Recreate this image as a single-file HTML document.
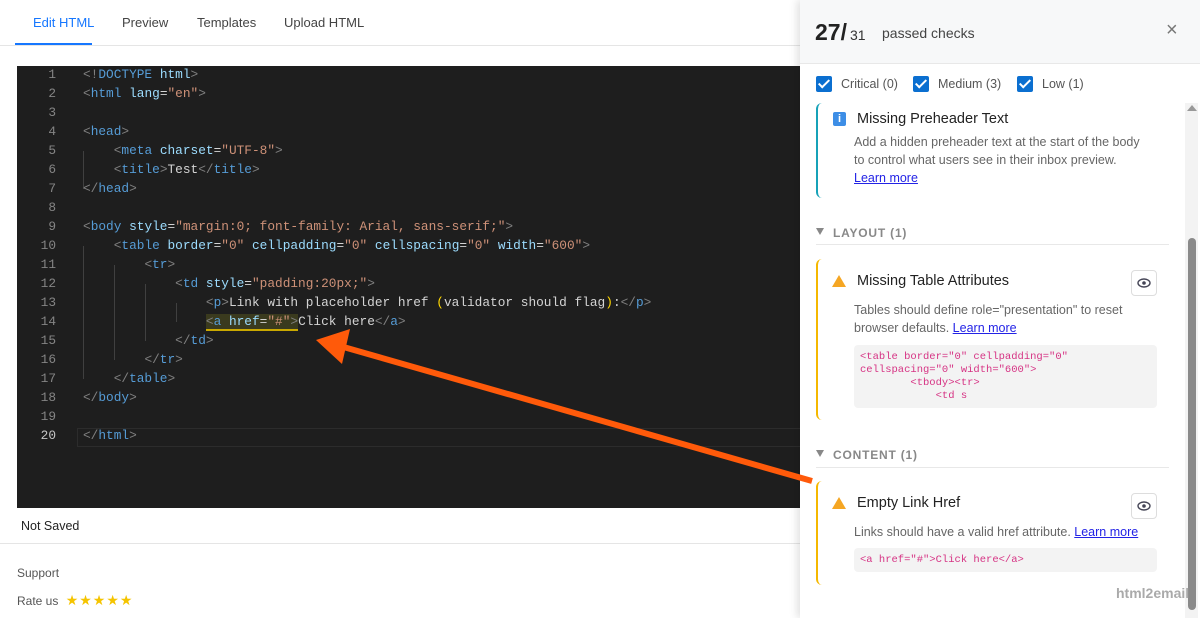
<!DOCTYPE html>
<html><head><style>
*{margin:0;padding:0;box-sizing:border-box}
body{width:1200px;height:618px;overflow:hidden;background:#fff;font-family:"Liberation Sans",sans-serif;position:relative;color:#333}
.a{position:absolute;white-space:nowrap}
.tab{font-size:13px;color:#444;top:15px}
#ed{position:absolute;left:17px;top:66px;width:800px;height:442px;background:#1e1e1e}
.ln{position:absolute;left:0;width:56px;text-align:right;font:12.8px "Liberation Mono",monospace;color:#858585}
.cd{position:absolute;left:66px;font:12.8px "Liberation Mono",monospace;color:#d4d4d4;white-space:pre}
.t{color:#569cd6}.g{color:#808080}.at{color:#9cdcfe}.s{color:#ce9178}.y{color:#ffd700}
.guide{position:absolute;width:1px;background:#404040}
#panel{position:absolute;left:800px;top:0;width:400px;height:618px;background:#fff;box-shadow:-3px 0 8px rgba(0,0,0,.12)}
.cb{position:absolute;width:16px;height:16px;background:#0b6fd0;border-radius:2px;top:76px}
.cb::after{content:"";position:absolute;left:5px;top:1px;width:4px;height:9px;border:solid #fff;border-width:0 2px 2px 0;transform:rotate(45deg)}
.lbl{font-size:12.5px;color:#555;top:77px}
.card{position:absolute;left:816px;width:340px;border-left:2px solid #f5b800;border-radius:6px 0 0 6px}
.ttl{font-size:14.5px;color:#222}
.desc{font-size:12.5px;color:#666;line-height:18px}
.lnk{color:#2323e6;text-decoration:underline}
.code{position:absolute;background:#f3f3f3;border-radius:4px;font:10.5px "Liberation Mono",monospace;color:#d63384;white-space:pre;line-height:13px;padding:6px}
.sec{font-size:12px;color:#888;font-weight:bold;letter-spacing:.8px}
.eye{position:absolute;width:26px;height:26px;border:1px solid #ddd;border-radius:4px;background:#fff}
.warn{position:absolute;width:0;height:0;border-left:7px solid transparent;border-right:7px solid transparent;border-bottom:12px solid #f5a623}
</style></head><body>
<div class="a tab" style="left:33px;color:#1677ff">Edit HTML</div>
<div class="a tab" style="left:122px">Preview</div>
<div class="a tab" style="left:197px">Templates</div>
<div class="a tab" style="left:284px">Upload HTML</div>
<div class="a" style="left:15px;top:43px;width:77px;height:2px;background:#1677ff"></div>
<div class="a" style="left:0;top:45px;width:800px;height:1px;background:#e5e5e5"></div>

<div id="ed">
<div class="guide" style="left:66px;top:85px;height:38px"></div>
<div class="guide" style="left:66px;top:180px;height:133px"></div>
<div class="guide" style="left:97px;top:199px;height:95px"></div>
<div class="guide" style="left:128px;top:218px;height:57px"></div>
<div class="guide" style="left:159px;top:237px;height:19px"></div>
<div class="a" style="left:60px;top:362px;width:740px;height:19px;border:1px solid #2c2c2c"></div>
</div>
<div id="code"></div>
<script>
var L=['<span class="g">&lt;!</span><span class="t">DOCTYPE</span> <span class="at">html</span><span class="g">&gt;</span>',
'<span class="g">&lt;</span><span class="t">html</span> <span class="at">lang</span>=<span class="s">"en"</span><span class="g">&gt;</span>','',
'<span class="g">&lt;</span><span class="t">head</span><span class="g">&gt;</span>',
'    <span class="g">&lt;</span><span class="t">meta</span> <span class="at">charset</span>=<span class="s">"UTF-8"</span><span class="g">&gt;</span>',
'    <span class="g">&lt;</span><span class="t">title</span><span class="g">&gt;</span>Test<span class="g">&lt;/</span><span class="t">title</span><span class="g">&gt;</span>',
'<span class="g">&lt;/</span><span class="t">head</span><span class="g">&gt;</span>','',
'<span class="g">&lt;</span><span class="t">body</span> <span class="at">style</span>=<span class="s">"margin:0; font-family: Arial, sans-serif;"</span><span class="g">&gt;</span>',
'    <span class="g">&lt;</span><span class="t">table</span> <span class="at">border</span>=<span class="s">"0"</span> <span class="at">cellpadding</span>=<span class="s">"0"</span> <span class="at">cellspacing</span>=<span class="s">"0"</span> <span class="at">width</span>=<span class="s">"600"</span><span class="g">&gt;</span>',
'        <span class="g">&lt;</span><span class="t">tr</span><span class="g">&gt;</span>',
'            <span class="g">&lt;</span><span class="t">td</span> <span class="at">style</span>=<span class="s">"padding:20px;"</span><span class="g">&gt;</span>',
'                <span class="g">&lt;</span><span class="t">p</span><span class="g">&gt;</span>Link with placeholder href <span class="y">(</span>validator should flag<span class="y">)</span>:<span class="g">&lt;/</span><span class="t">p</span><span class="g">&gt;</span>',
'                <span style="background:#3a3a1e;border-bottom:2px solid #c9a800"><span class="g">&lt;</span><span class="t">a</span> <span class="at">href</span>=<span class="s">"#"</span><span class="g">&gt;</span></span>Click here<span class="g">&lt;/</span><span class="t">a</span><span class="g">&gt;</span>',
'            <span class="g">&lt;/</span><span class="t">td</span><span class="g">&gt;</span>',
'        <span class="g">&lt;/</span><span class="t">tr</span><span class="g">&gt;</span>',
'    <span class="g">&lt;/</span><span class="t">table</span><span class="g">&gt;</span>',
'<span class="g">&lt;/</span><span class="t">body</span><span class="g">&gt;</span>','',
'<span class="g">&lt;/</span><span class="t">html</span><span class="g">&gt;</span>'];
var h='';for(var i=0;i<L.length;i++){var y=66+i*19+1;h+='<div class="ln" style="top:'+y+'px;'+(i==19?'color:#c6c6c6':'')+'">'+(i+1)+'</div><div class="cd" style="top:'+y+'px;left:83px">'+L[i]+'</div>';}
document.getElementById('code').innerHTML=h;
</script>

<div class="a" style="left:21px;top:519px;font-size:12.5px;color:#222">Not Saved</div>
<div class="a" style="left:0;top:543px;width:800px;height:1px;background:#e5e5e5"></div>
<div class="a" style="left:17px;top:566px;font-size:12px;color:#555">Support</div>
<div class="a" style="left:17px;top:592px;font-size:12px;color:#555">Rate us <span style="color:#f5c400;font-size:14px;letter-spacing:1px;margin-left:4px">★★★★★</span></div>

<div id="panel">
<div class="a" style="left:0;top:0;width:400px;height:64px;background:#f7f8f9;border-bottom:1px solid #e8e8e8"></div>
<div class="a" style="left:15px;top:19px;font-size:23px;font-weight:bold;color:#222">27/<span style="font-size:14px;font-weight:normal;color:#333;margin-left:3px">31</span></div>
<div class="a" style="left:82px;top:25px;font-size:14px;color:#444">passed checks</div>
<div class="a" style="left:366px;top:19px;font-size:20px;color:#777">×</div>
<div class="cb" style="left:16px"></div><div class="a lbl" style="left:41px">Critical (0)</div>
<div class="cb" style="left:113px"></div><div class="a lbl" style="left:138px">Medium (3)</div>
<div class="cb" style="left:217px"></div><div class="a lbl" style="left:242px">Low (1)</div>
<div class="a" style="left:385px;top:103px;width:13px;height:515px;background:#f3f3f3"></div>
<div class="a" style="left:387px;top:105px;width:0;height:0;border-left:5px solid transparent;border-right:5px solid transparent;border-bottom:6px solid #999"></div>
<div class="a" style="left:388px;top:238px;width:8px;height:372px;background:#8a8a8a;border-radius:4px"></div>
</div>

<div class="card" style="top:103px;height:95px;border-left-color:#17a2b8"></div>
<div class="a" style="left:833px;top:112px;width:13px;height:14px;background:#3d8ee6;border-radius:2px;color:#fff;font-size:11px;font-weight:bold;text-align:center;line-height:14px">i</div>
<div class="a ttl" style="left:857px;top:111px">Missing Preheader Text</div>
<div class="a desc" style="left:854px;top:133px">Add a hidden preheader text at the start of the body<br>to control what users see in their inbox preview.<br><span class="lnk">Learn more</span></div>

<div class="a" style="left:816px;top:228px;border-left:4px solid transparent;border-right:4px solid transparent;border-top:7px solid #888"></div>
<div class="a sec" style="left:833px;top:226px">LAYOUT (1)</div>
<div class="a" style="left:816px;top:244px;width:353px;height:1px;background:#e8e8e8"></div>

<div class="card" style="top:259px;height:161px"></div>
<div class="warn" style="left:832px;top:275px"></div>
<div class="a ttl" style="left:857px;top:273px">Missing Table Attributes</div>
<div class="eye" style="left:1131px;top:270px"><svg width="24" height="24" viewBox="0 0 24 24"><ellipse cx="12" cy="12" rx="6" ry="4" fill="none" stroke="#445" stroke-width="1.4"/><circle cx="12" cy="12" r="1.8" fill="#445"/></svg></div>
<div class="a desc" style="left:854px;top:301px">Tables should define role="presentation" to reset<br>browser defaults. <span class="lnk">Learn more</span></div>
<div class="code" style="left:854px;top:345px;width:303px;height:63px">&lt;table border="0" cellpadding="0"
cellspacing="0" width="600"&gt;
        &lt;tbody&gt;&lt;tr&gt;
            &lt;td s</div>

<div class="a" style="left:816px;top:450px;border-left:4px solid transparent;border-right:4px solid transparent;border-top:7px solid #888"></div>
<div class="a sec" style="left:833px;top:448px">CONTENT (1)</div>
<div class="a" style="left:816px;top:467px;width:353px;height:1px;background:#e8e8e8"></div>

<div class="card" style="top:481px;height:104px"></div>
<div class="warn" style="left:832px;top:497px"></div>
<div class="a ttl" style="left:857px;top:495px">Empty Link Href</div>
<div class="eye" style="left:1131px;top:493px"><svg width="24" height="24" viewBox="0 0 24 24"><ellipse cx="12" cy="12" rx="6" ry="4" fill="none" stroke="#445" stroke-width="1.4"/><circle cx="12" cy="12" r="1.8" fill="#445"/></svg></div>
<div class="a desc" style="left:854px;top:523px">Links should have a valid href attribute. <span class="lnk">Learn more</span></div>
<div class="code" style="left:854px;top:548px;width:303px;height:24px">&lt;a href="#"&gt;Click here&lt;/a&gt;</div>
<div class="a" style="left:1116px;top:585px;font-size:14px;font-weight:bold;color:#aaa">html2email</div>

<svg class="a" style="left:0;top:0" width="1200" height="618"><line x1="812" y1="481" x2="340" y2="346" stroke="#ff5a0a" stroke-width="6"/><polygon points="316,340 350,329 342,364" fill="#ff5a0a"/></svg>
</body></html>
